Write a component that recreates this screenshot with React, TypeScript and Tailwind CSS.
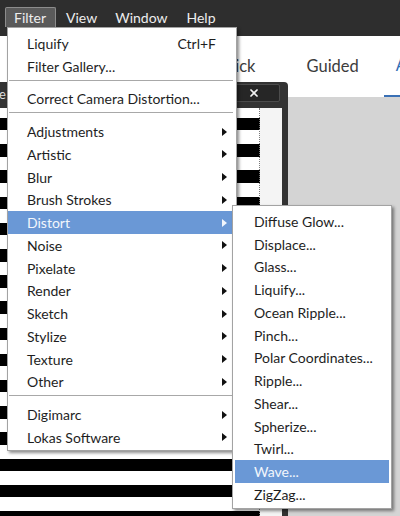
import React from 'react';
import { X } from 'lucide-react';

type Item = { label: string; shortcut?: string; sub?: boolean; active?: boolean } | 'sep';

const filterMenu: Item[] = [
  { label: 'Liquify', shortcut: 'Ctrl+F' },
  { label: 'Filter Gallery...' },
  'sep',
  { label: 'Correct Camera Distortion...' },
  'sep',
  { label: 'Adjustments', sub: true },
  { label: 'Artistic', sub: true },
  { label: 'Blur', sub: true },
  { label: 'Brush Strokes', sub: true },
  { label: 'Distort', sub: true, active: true },
  { label: 'Noise', sub: true },
  { label: 'Pixelate', sub: true },
  { label: 'Render', sub: true },
  { label: 'Sketch', sub: true },
  { label: 'Stylize', sub: true },
  { label: 'Texture', sub: true },
  { label: 'Other', sub: true },
  'sep',
  { label: 'Digimarc', sub: true },
  { label: 'Lokas Software', sub: true },
];

const distortMenu = [
  'Diffuse Glow...',
  'Displace...',
  'Glass...',
  'Liquify...',
  'Ocean Ripple...',
  'Pinch...',
  'Polar Coordinates...',
  'Ripple...',
  'Shear...',
  'Spherize...',
  'Twirl...',
  'Wave...',
  'ZigZag...',
];

function Arrow({ light }: { light?: boolean }) {
  return (
    <svg width="5" height="8" viewBox="0 0 5 8" className="shrink-0">
      <polygon points="0,0 5,4 0,8" fill={light ? '#f2f6fc' : '#111'} />
    </svg>
  );
}

export default function App() {
  return (
    <div className="relative w-[400px] h-[516px] overflow-hidden bg-[#d4d4d4] font-['Lato',sans-serif]">
      {/* menu bar */}
      <div className="h-[36px] bg-[#2e2e2e] flex items-start pt-[7px] pl-[5px] text-[14px] text-[#ededed]">
        <div className="h-[20px] pl-[8px] pr-[9px] flex items-center bg-[#5a5a5a] border border-b-0 border-[#8c8c8c] rounded-t-[2px]">
          Filter
        </div>
        <span className="h-[20px] flex items-center ml-[10px]">View</span>
        <span className="h-[20px] flex items-center ml-[18px]">Window</span>
        <span className="h-[20px] flex items-center ml-[19px]">Help</span>
      </div>

      {/* mode tabs */}
      <div className="h-[61px] bg-white flex items-stretch text-[16.5px] text-[#3c3c3c]">
        <span className="ml-[213px] flex items-center">Quick</span>
        <span className="ml-[51px] flex items-center">Guided</span>
        <div className="ml-[25px] pl-[12px] flex items-center border-b-2 border-[#3a70b5] text-[#2f6db5]">
          Advanced
        </div>
      </div>

      {/* floating document window */}
      <div className="absolute left-0 top-[82px] w-[288px] bottom-0 bg-[#333] rounded-tr-[4px] flex flex-col">
        <div className="h-[26px] shrink-0 flex items-start justify-between">
          <span className="text-[13px] text-[#ddd] leading-[24px] -ml-[1px]">e</span>
          <div className="mt-[2px] mr-[8px] w-[53px] h-[18px] bg-[#262626] border border-[#4c4c4c] rounded-[2px] flex items-center justify-center">
            <X size={12} strokeWidth={3.5} color="#f2f2f2" />
          </div>
        </div>
        <div className="flex-1 flex mr-[6px]">
          <div className="w-[260px] border-r border-dotted border-[#777] bg-[repeating-linear-gradient(to_bottom,#fff_0px,#fff_10px,#000_10px,#000_22.5px,#fff_22.5px,#fff_26.2px)]" />
          <div className="flex-1 bg-[#f4f4f4]" />
        </div>
      </div>

      {/* Filter menu */}
      <div className="absolute left-[7px] top-[27px] w-[230px] bg-white border border-[#a3a3a3] shadow-[2px_2px_3px_rgba(0,0,0,0.45)] pt-[4px] pb-[1px] text-[14px] text-[#1e1e1e]">
        {filterMenu.map((it, i) =>
          it === 'sep' ? (
            <div key={i} className="pt-[2px] pb-[7px] pl-[1px] pr-[3px]">
              <div className="h-px bg-[#a8a8a8]" />
            </div>
          ) : (
            <div
              key={i}
              className={
                it.active
                  ? 'h-[22.75px] flex items-center justify-between pl-[19px] pr-[9px] bg-[#6a98d6] text-[#f2f6fc]'
                  : 'h-[22.75px] flex items-center justify-between pl-[19px] pr-[9px]'
              }
            >
              <span>{it.label}</span>
              {it.shortcut && <span className="mr-[11px]">{it.shortcut}</span>}
              {it.sub && <Arrow light={it.active} />}
            </div>
          )
        )}
      </div>

      {/* Distort submenu */}
      <div className="absolute left-[232px] top-[205px] w-[160px] bg-white border border-[#a3a3a3] shadow-[2px_2px_3px_rgba(0,0,0,0.45)] pt-[4px] pb-[2px] px-[2px] text-[14px] text-[#1e1e1e]">
        {distortMenu.map((label) => (
          <div
            key={label}
            className={
              label === 'Wave...'
                ? 'h-[22.75px] flex items-center pl-[19px] bg-[#6a98d6] text-[#f2f6fc]'
                : 'h-[22.75px] flex items-center pl-[19px]'
            }
          >
            {label}
          </div>
        ))}
      </div>
    </div>
  );
}
